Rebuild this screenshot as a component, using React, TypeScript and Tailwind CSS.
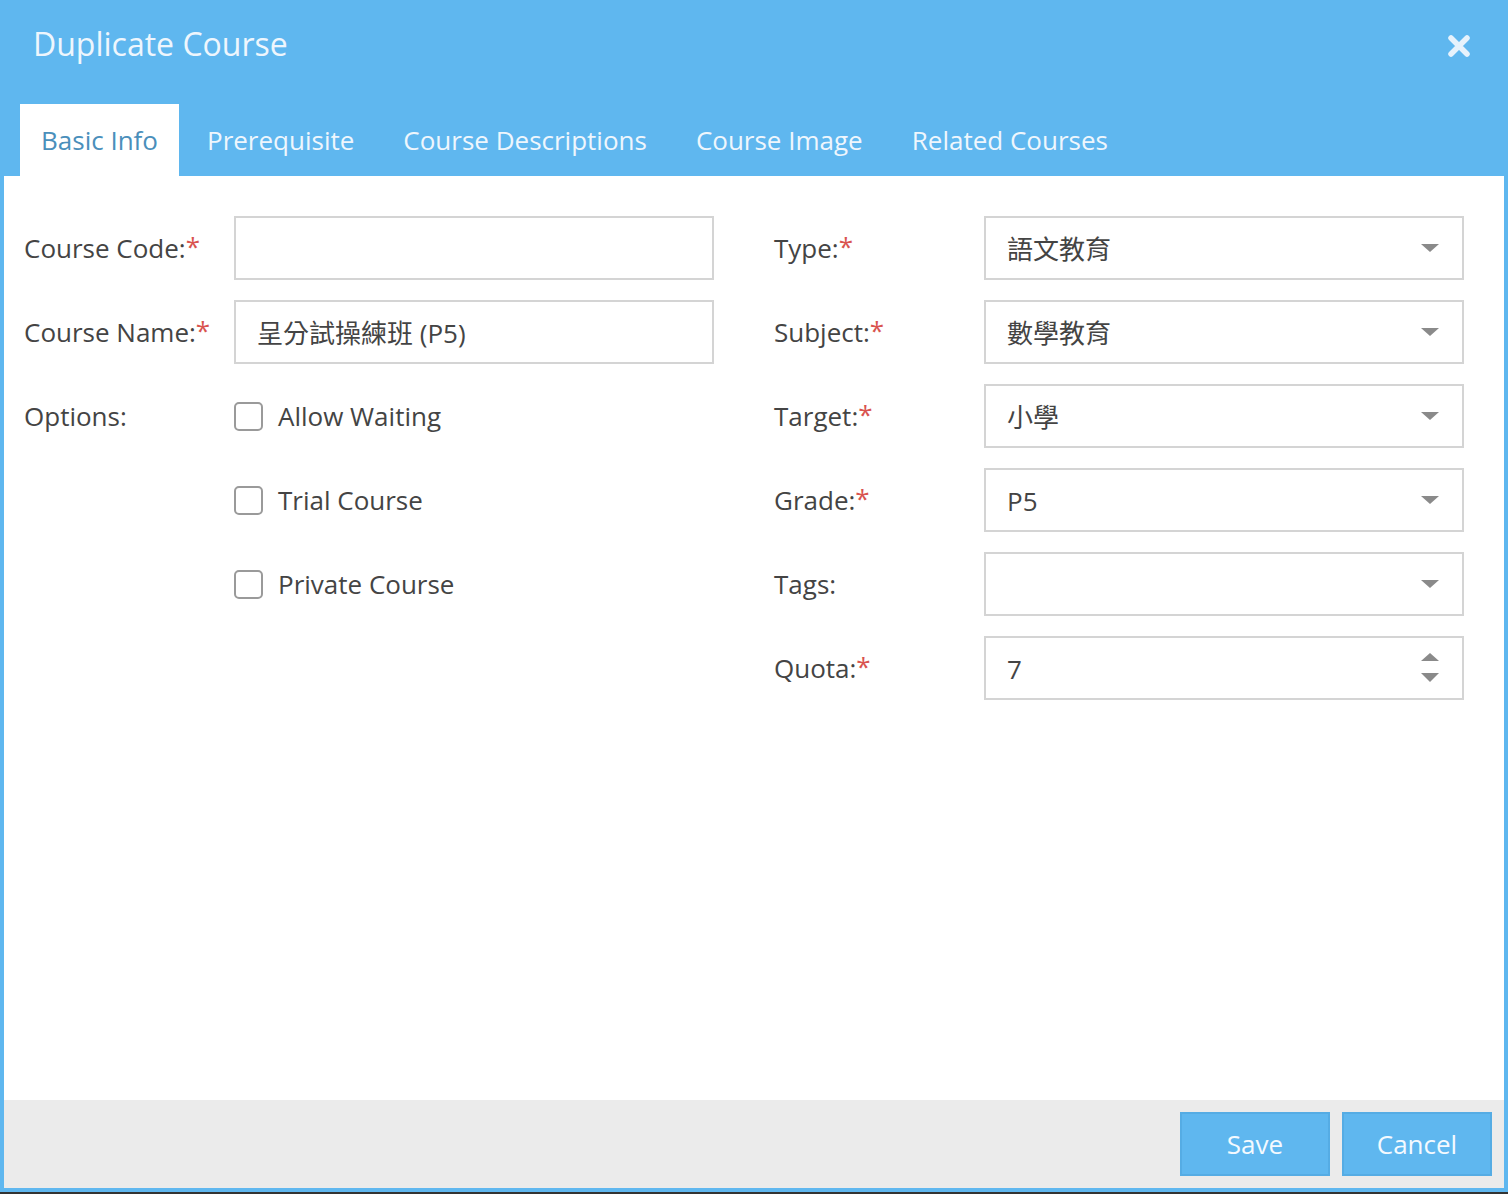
import React from "react";

const font = { fontFamily: '"Open Sans", "Noto Sans CJK TC", sans-serif' };

function Label({ text, req }: { text: string; req?: boolean }) {
  return (
    <div className="w-[210px] shrink-0 flex items-center h-[64px] text-[26px] text-[#444]">
      <span>{text}</span>
      {req && <span className="text-[#d9534f] -mt-[4px]">*</span>}
    </div>
  );
}

function Caret() {
  return (
    <svg width="20" height="10" viewBox="0 0 20 10" className="shrink-0">
      <path d="M1 1 H19 L10 9 Z" fill="#8a8a8a" />
    </svg>
  );
}

function Select({ value }: { value: string }) {
  return (
    <div className="w-[480px] h-[64px] border-2 border-[#d4d4d4] flex items-center justify-between pl-[21px] pr-[22px] text-[26px] text-[#444]">
      <span className="mt-[3px]">{value}</span>
      <Caret />
    </div>
  );
}

function Check({ text }: { text: string }) {
  return (
    <div className="flex items-center h-[64px] gap-[15px] text-[26px] text-[#444]">
      <div className="w-[29px] h-[29px] border-2 border-[#9a9a9a] rounded-[5px] bg-white" />
      <span>{text}</span>
    </div>
  );
}

export default function App() {
  return (
    <div className="w-[1508px] h-[1194px] bg-[#333] flex flex-col" style={font}>
      <div className="h-[1192px] bg-[#5fb7ef] flex flex-col">
        <div className="h-[104px] shrink-0 flex items-start justify-between pl-[33px] pr-[38px] pt-[24px]">
          <div className="text-[32px] text-[#eef6fd] leading-[40px]">Duplicate Course</div>
          <svg width="22" height="22" viewBox="0 0 22 22" className="mt-[11px]">
            <path d="M3 3 L19 19 M19 3 L3 19" stroke="#e6f2fc" strokeWidth="5.5" strokeLinecap="round" />
          </svg>
        </div>
        <div className="h-[72px] shrink-0 flex items-stretch pl-[20px] text-[26px]">
          <div className="bg-white text-[#4a8fbb] px-[21px] flex items-center">Basic Info</div>
          <div className="text-[#eef6fd] pl-[28px] pr-[24px] flex items-center">Prerequisite</div>
          <div className="text-[#eef6fd] px-[25px] flex items-center">Course Descriptions</div>
          <div className="text-[#eef6fd] px-[24px] flex items-center">Course Image</div>
          <div className="text-[#eef6fd] px-[25px] flex items-center">Related Courses</div>
        </div>
        <div className="mx-[4px] flex-1 bg-white flex flex-col">
          <div className="flex-1 flex pt-[40px] pl-[20px]">
            <div className="flex flex-col gap-[20px]" style={{ width: 690 }}>
              <div className="flex">
                <Label text="Course Code:" req />
                <div className="w-[480px] h-[64px] border-2 border-[#d4d4d4]" />
              </div>
              <div className="flex">
                <Label text="Course Name:" req />
                <div className="w-[480px] h-[64px] border-2 border-[#d4d4d4] flex items-center pl-[21px] text-[26px] text-[#444]">
                  <span className="mt-[3px]">呈分試操練班 (P5)</span>
                </div>
              </div>
              <div className="flex">
                <Label text="Options:" />
                <div className="flex flex-col gap-[20px]">
                  <Check text="Allow Waiting" />
                  <Check text="Trial Course" />
                  <Check text="Private Course" />
                </div>
              </div>
            </div>
            <div className="flex flex-col gap-[20px] ml-[60px]">
              <div className="flex">
                <Label text="Type:" req />
                <Select value="語文教育" />
              </div>
              <div className="flex">
                <Label text="Subject:" req />
                <Select value="數學教育" />
              </div>
              <div className="flex">
                <Label text="Target:" req />
                <Select value="小學" />
              </div>
              <div className="flex">
                <Label text="Grade:" req />
                <Select value="P5" />
              </div>
              <div className="flex">
                <Label text="Tags:" />
                <Select value="" />
              </div>
              <div className="flex">
                <Label text="Quota:" req />
                <div className="w-[480px] h-[64px] border-2 border-[#d4d4d4] flex items-center justify-between pl-[21px] pr-[22px] text-[26px] text-[#444]">
                  <span className="mt-[3px]">7</span>
                  <svg width="20" height="34" viewBox="0 0 20 34">
                    <path d="M1 10 H19 L10 2 Z" fill="#8a8a8a" />
                    <path d="M1 22 H19 L10 31 Z" fill="#8a8a8a" />
                  </svg>
                </div>
              </div>
            </div>
          </div>
          <div className="h-[88px] shrink-0 bg-[#ebebeb] flex items-center justify-end gap-[12px] pr-[12px]">
            <div className="w-[150px] h-[64px] bg-[#5fb7ef] border-2 border-[#55ace4] text-[#f4faff] text-[26px] flex items-center justify-center">Save</div>
            <div className="w-[150px] h-[64px] bg-[#5fb7ef] border-2 border-[#55ace4] text-[#f4faff] text-[26px] flex items-center justify-center">Cancel</div>
          </div>
        </div>
        <div className="h-[4px] shrink-0" />
      </div>
    </div>
  );
}
